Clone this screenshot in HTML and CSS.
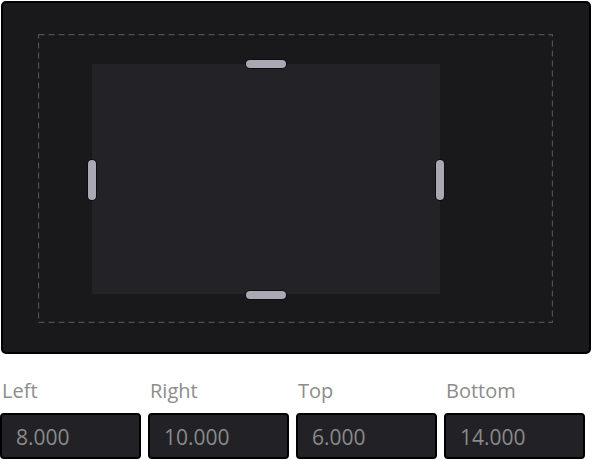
FILE: index.html
```html
<!DOCTYPE html>
<html>
<head>
<meta charset="utf-8">
<link rel="stylesheet" href="styles.css">
</head>
<body>
<div class="frame">
  <div class="safe">
    <svg class="dash" width="515" height="289" viewBox="0 0 515 289"><rect x="0.5" y="0.5" width="514" height="288" fill="none" stroke="#505055" stroke-width="1.3" stroke-dasharray="6 4"/></svg>
    <div class="crop">
      <span class="handle h-top"></span>
      <span class="handle h-bottom"></span>
      <span class="handle v-left"></span>
      <span class="handle v-right"></span>
    </div>
  </div>
</div>
<div class="fields">
  <div class="field"><div class="label">Left</div><div class="input">8.000</div></div>
  <div class="field"><div class="label">Right</div><div class="input">10.000</div></div>
  <div class="field"><div class="label">Top</div><div class="input">6.000</div></div>
  <div class="field"><div class="label">Bottom</div><div class="input">14.000</div></div>
</div>
</body>
</html>
```
FILE: styles.css
```css
html, body { margin: 0; padding: 0; background: #ffffff; }
body { font-family: "Open Sans", "Noto Sans", sans-serif; width: 592px; height: 460px; overflow: hidden; }
.frame {
  margin: 1px 0 0 1px;
  width: 590px; height: 353px;
  box-sizing: border-box;
  border: 2px solid #000;
  border-radius: 5px;
  background: #19191b;
  padding: 31px 36px 30px 35px;
}
.safe {
  position: relative;
  height: 100%;
  box-sizing: border-box;
  padding: 30px 113px 28px 54px;
}
.dash { position: absolute; left: 0; top: 0; }
.crop {
  position: relative;
  height: 100%;
  background: #222227;
}
.handle {
  position: absolute;
  background: #a9a8b3;
  border-radius: 4px;
  box-shadow: 0 0 0 1px #0e0e10;
}
.h-top, .h-bottom { width: 40px; height: 8px; left: 50%; margin-left: -20px; }
.h-top { top: -4px; }
.h-bottom { bottom: -5px; }
.v-left, .v-right { width: 8px; height: 40px; top: 96px; }
.v-left { left: -4px; }
.v-right { right: -4px; }
.fields {
  display: grid;
  grid-template-columns: repeat(4, 141px);
  column-gap: 7px;
  margin-top: 24px;
}
.label {
  color: #8d8d8d;
  font-size: 20px;
  line-height: 26px;
  padding-left: 2px;
  height: 35px;
}
.input {
  height: 46px;
  box-sizing: border-box;
  border: 2px solid #000;
  border-radius: 4px;
  background: #222226;
  color: #8a8a8a;
  font-size: 21px;
  line-height: 44px;
  padding-left: 14px;
}
```
